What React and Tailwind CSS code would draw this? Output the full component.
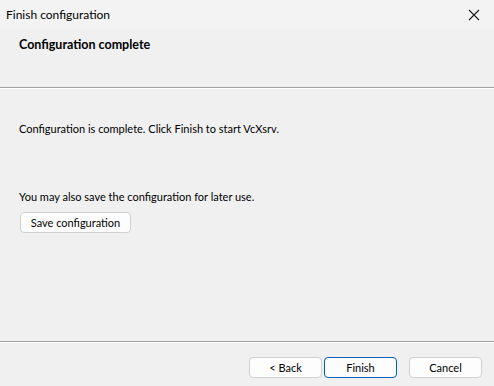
export default function App() {
  return (
    <div className="w-[494px] h-[386px] bg-[#f0f0f0] flex flex-col text-[11px] text-black overflow-hidden font-['Lato',sans-serif]">
      {/* title bar */}
      <div className="h-[29px] bg-[#f3f3f3] flex items-center justify-between pl-[6px] pr-[14px] shrink-0">
        <span className="text-[12px] leading-none">Finish configuration</span>
        <svg width="12" height="12" viewBox="0 0 12 12" className="text-[#1a1a1a]">
          <path d="M1 1 L11 11 M11 1 L1 11" stroke="currentColor" strokeWidth="1.1" fill="none" />
        </svg>
      </div>

      {/* header */}
      <div className="h-[58px] bg-[#f0f0f0] pl-[19px] pt-[8px] shrink-0">
        <div className="font-bold text-[12.5px] leading-[16px]">Configuration complete</div>
      </div>
      <div className="h-px bg-[#a0a0a0] shrink-0" />
      <div className="h-px bg-[#ffffff] shrink-0" />

      {/* body */}
      <div className="flex-1 flex flex-col pl-[19px] pt-[32px]">
        <div className="leading-[16px]">Configuration is complete. Click Finish to start VcXsrv.</div>
        <div className="leading-[16px] mt-[52px]">You may also save the configuration for later use.</div>
        <button className="mt-[7px] self-start h-[21px] w-[111px] ml-[1px] bg-[#fdfdfd] border border-[#d0d0d0] rounded-[4px] text-[11px] leading-none">
          Save configuration
        </button>
      </div>

      <div className="h-px bg-[#a0a0a0] shrink-0" />
      <div className="h-px bg-[#ffffff] shrink-0" />

      {/* footer */}
      <div className="h-[43px] flex items-start justify-end pt-[14px] pr-[12px] shrink-0">
        <button className="h-[21px] w-[73px] bg-[#fdfdfd] border border-[#d0d0d0] rounded-[4px] text-[11px] leading-none">&lt; Back</button>
        <button className="h-[21px] w-[73px] ml-[2px] bg-[#fdfdfd] border border-[#005fb8] rounded-[4px] text-[11px] leading-none">Finish</button>
        <button className="h-[21px] w-[73px] ml-[12px] bg-[#fdfdfd] border border-[#d0d0d0] rounded-[4px] text-[11px] leading-none">Cancel</button>
      </div>
    </div>
  );
}
